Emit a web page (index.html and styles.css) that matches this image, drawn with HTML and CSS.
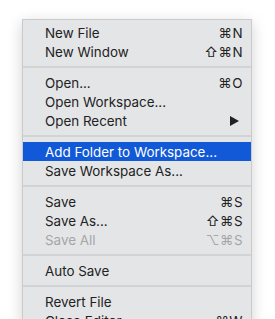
FILE: index.html
```html
<!DOCTYPE html>
<html lang="en">
<head>
    <meta charset="UTF-8">
    <title>File Menu</title>
    <link rel="stylesheet" href="styles.css">
</head>
<body>
    <div class="menu">
        <div class="item"><span>New File</span><span class="key">⌘N</span></div>
        <div class="item"><span>New Window</span><span class="key">⇧⌘N</span></div>
        <div class="sep"></div>
        <div class="item"><span>Open...</span><span class="key">⌘O</span></div>
        <div class="item"><span>Open Workspace...</span></div>
        <div class="item"><span>Open Recent</span>
            <svg class="arrow" width="9" height="10" viewBox="0 0 9 10"><path d="M0 0 L9 5 L0 10 Z" fill="#222"/></svg>
        </div>
        <div class="sep"></div>
        <div class="item active"><span>Add Folder to Workspace...</span></div>
        <div class="item"><span>Save Workspace As...</span></div>
        <div class="sep"></div>
        <div class="item"><span>Save</span><span class="key">⌘S</span></div>
        <div class="item"><span>Save As...</span><span class="key">⇧⌘S</span></div>
        <div class="item disabled"><span>Save All</span><span class="key">⌥⌘S</span></div>
        <div class="sep"></div>
        <div class="item"><span>Auto Save</span></div>
        <div class="sep"></div>
        <div class="item"><span>Revert File</span></div>
        <div class="item"><span>Close Editor</span><span class="key">⌘W</span></div>
    </div>
</body>
</html>
```

FILE: styles.css
```css
* {
    margin: 0;
    padding: 0;
    box-sizing: border-box;
}

body {
    background: #ffffff;
    font-family: 'Inter', 'DejaVu Sans', sans-serif;
    font-size: 13.4px;
    color: #222222;
    padding: 19px 0 0 22px;
    height: 319px;
    overflow: hidden;
}

.menu {
    width: 230px;
    background: #e4e5e7;
    border: 1px solid #c9cacc;
    border-bottom: none;
    padding-top: 3px;
    box-shadow: 0 4px 14px rgba(0, 0, 0, 0.18);
}

.item {
    height: 19px;
    display: flex;
    justify-content: space-between;
    align-items: center;
    padding: 0 8px 0 22px;
}

.item.active {
    background: #1159d6;
    color: #ffffff;
}

.item.disabled {
    color: #a4a5a7;
}

.key {
    font-family: 'Inter', 'DejaVu Sans', sans-serif;
    letter-spacing: 0.5px;
}

.arrow {
    margin-right: 4px;
}

.sep {
    height: 12px;
    display: flex;
    align-items: center;
}

.sep::after {
    content: '';
    display: block;
    width: 100%;
    height: 2px;
    background: #d2d3d5;
}
```
